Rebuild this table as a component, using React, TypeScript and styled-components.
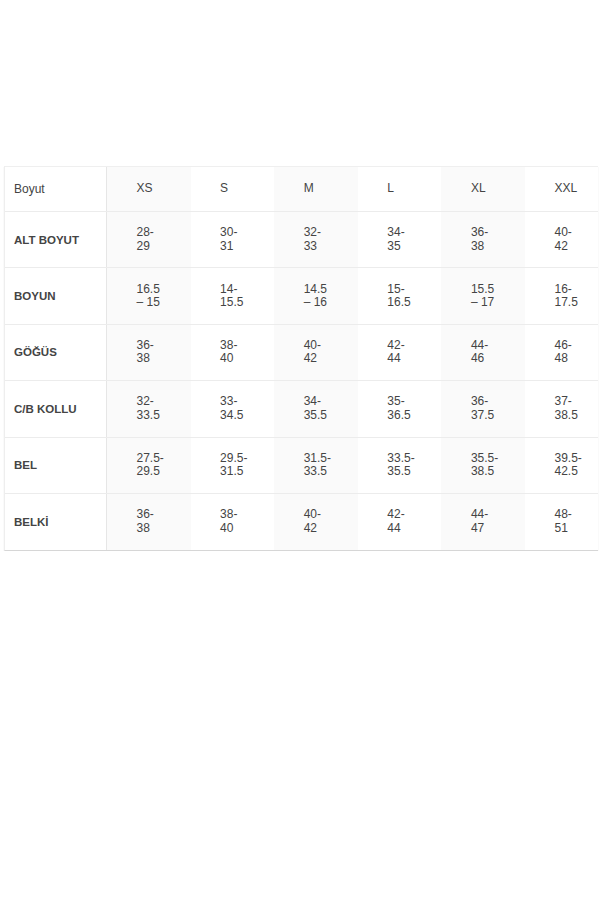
import React from 'react';
import styled, { createGlobalStyle } from 'styled-components';

const GlobalStyle = createGlobalStyle`
  body {
    margin: 0;
    background: #fff;
    font-family: "Liberation Sans", Arial, sans-serif;
  }
`;

const sizes = ['XS', 'S', 'M', 'L', 'XL', 'XXL'];

const rows: { label: string; values: string[][] }[] = [
  { label: 'ALT BOYUT', values: [['28-', '29'], ['30-', '31'], ['32-', '33'], ['34-', '35'], ['36-', '38'], ['40-', '42']] },
  { label: 'BOYUN', values: [['16.5', '– 15'], ['14-', '15.5'], ['14.5', '– 16'], ['15-', '16.5'], ['15.5', '– 17'], ['16-', '17.5']] },
  { label: 'GÖĞÜS', values: [['36-', '38'], ['38-', '40'], ['40-', '42'], ['42-', '44'], ['44-', '46'], ['46-', '48']] },
  { label: 'C/B KOLLU', values: [['32-', '33.5'], ['33-', '34.5'], ['34-', '35.5'], ['35-', '36.5'], ['36-', '37.5'], ['37-', '38.5']] },
  { label: 'BEL', values: [['27.5-', '29.5'], ['29.5-', '31.5'], ['31.5-', '33.5'], ['33.5-', '35.5'], ['35.5-', '38.5'], ['39.5-', '42.5']] },
  { label: 'BELKİ', values: [['36-', '38'], ['38-', '40'], ['40-', '42'], ['42-', '44'], ['44-', '47'], ['48-', '51']] },
];

const Wrapper = styled.div`
  margin: 166px 2px 0 4px;
  overflow: hidden;
  border-top: 1px solid #efefef;
  border-left: 1px solid #eeeeee;
  border-bottom: 1px solid #d6d6d6;
  box-shadow: 0 1px 1px rgba(0, 0, 0, 0.12);
`;

const Row = styled.div<{ $header?: boolean }>`
  display: grid;
  grid-template-columns: 102px repeat(6, 83.6px);
  height: ${(p) => (p.$header ? '44px' : '55.4px')};
  border-bottom: 1px solid #ececec;
  &:last-child {
    border-bottom: none;
    height: 56px;
  }
`;

const LabelCell = styled.div<{ $header?: boolean }>`
  display: flex;
  align-items: center;
  padding-left: 9px;
  border-right: 1px solid #e6e6e6;
  font-size: ${(p) => (p.$header ? '12px' : '11.5px')};
  font-weight: ${(p) => (p.$header ? 'normal' : 'bold')};
  color: #444;
`;

const Cell = styled.div<{ $shaded: boolean }>`
  display: flex;
  flex-direction: column;
  justify-content: center;
  padding-left: 29.5px;
  background: ${(p) => (p.$shaded ? '#fafafa' : '#fff')};
  font-size: 12px;
  line-height: 13.5px;
  color: #444;
  white-space: nowrap;
`;

export default function App() {
  return (
    <>
      <GlobalStyle />
      <Wrapper>
        <Row $header>
          <LabelCell $header>Boyut</LabelCell>
          {sizes.map((s, i) => (
            <Cell key={s} $shaded={i % 2 === 0}>{s}</Cell>
          ))}
        </Row>
        {rows.map((r) => (
          <Row key={r.label}>
            <LabelCell>{r.label}</LabelCell>
            {r.values.map((v, i) => (
              <Cell key={i} $shaded={i % 2 === 0}>
                <span>{v[0]}</span>
                <span>{v[1]}</span>
              </Cell>
            ))}
          </Row>
        ))}
      </Wrapper>
    </>
  );
}
